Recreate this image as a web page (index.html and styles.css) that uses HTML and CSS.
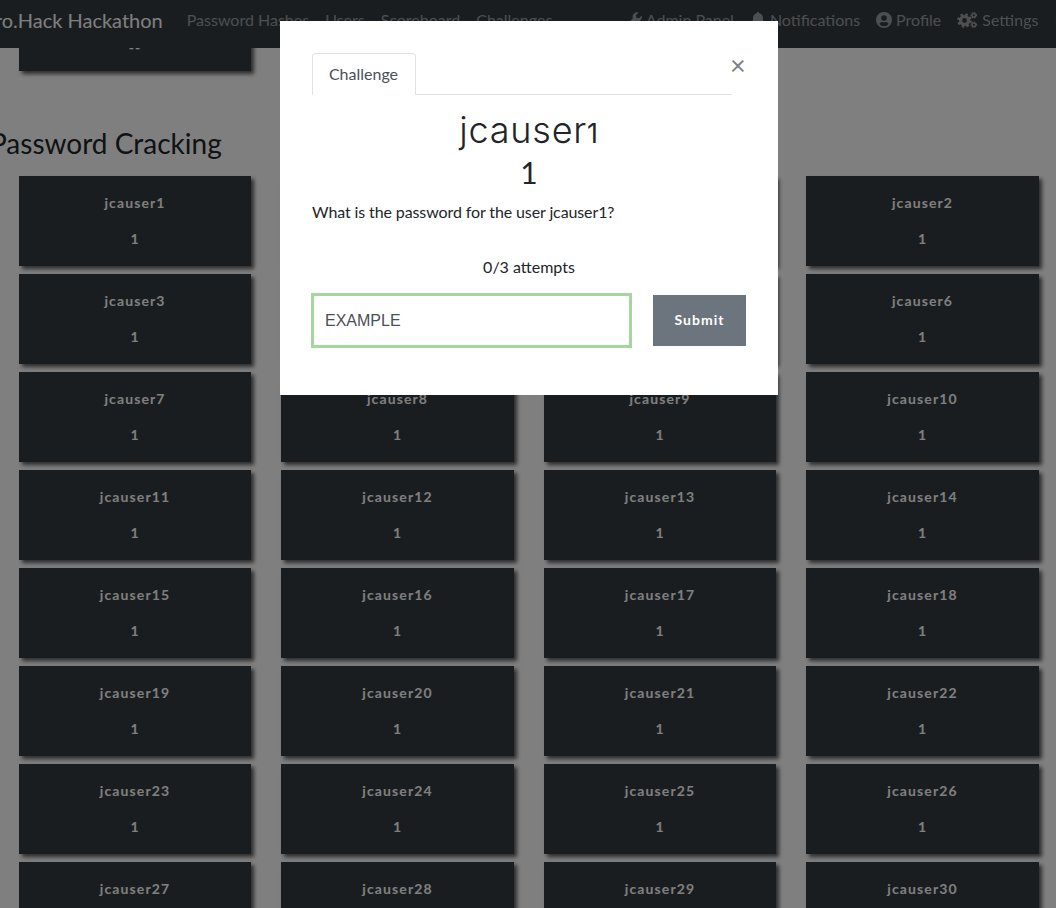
FILE: index.html
```html
<!DOCTYPE html>
<html lang="en">
<head>
<meta charset="UTF-8">
<meta name="viewport" content="width=device-width, initial-scale=1.0">
<title>Pro.Hack Hackathon</title>
<link rel="stylesheet" href="styles.css">
</head>
<body>
<div class="navbar">
  <a class="brand">Pro.Hack Hackathon</a>
  <nav class="nav-left">
    <a>Password Hashes</a>
    <a>Users</a>
    <a>Scoreboard</a>
    <a>Challenges</a>
  </nav>
  <nav class="nav-right">
    <a><svg class="icon" viewBox="0 0 16 16"><path d="M15.700 3.600 13 6.300l-2.600-.5-.5-2.600L12.600.5a4.500 4.500 0 0 0-5.700 5.800L.7 12.500a1.900 1.900 0 0 0 2.700 2.700l6.200-6.200a4.500 4.500 0 0 0 6.100-5.400z"/></svg>Admin Panel</a>
    <a><svg class="icon" viewBox="0 0 16 16"><path d="M8 0a1.200 1.200 0 0 0-1.200 1.300C4.400 1.800 3 3.700 3 6c0 3.400-1.300 4.500-2 5.400v1.100h14v-1.100c-.7-.9-2-2-2-5.400 0-2.300-1.400-4.200-3.800-4.700A1.200 1.200 0 0 0 8 0zM6.200 13.500a1.800 1.800 0 0 0 3.600 0z"/></svg>Notifications</a>
    <a><svg class="icon" viewBox="0 0 16 16"><path fill-rule="evenodd" d="M8 0a8 8 0 1 0 0 16A8 8 0 0 0 8 0zm0 3.200a2.800 2.800 0 1 1 0 5.600 2.800 2.800 0 0 1 0-5.600zm0 11a6.200 6.200 0 0 1-4.700-2.200C3.800 10.800 5 10 6.200 10c.6.200 1.200.3 1.800.3s1.200-.1 1.800-.3c1.200 0 2.400.8 2.900 2A6.200 6.200 0 0 1 8 14.200z"/></svg>Profile</a>
    <a><svg class="icon icon-wide" viewBox="0 0 20 16">
      <g class="cog"><circle cx="7" cy="8.500" r="4" stroke-width="3.200"/><circle cx="7" cy="8.500" r="6.300" stroke-width="2" stroke-dasharray="2.600 2.350"/></g>
      <g class="cog"><circle cx="16.300" cy="3.200" r="1.800" stroke-width="1.500"/><circle cx="16.300" cy="3.200" r="2.900" stroke-width="1" stroke-dasharray="1.300 1.430"/></g>
      <g class="cog"><circle cx="16.300" cy="12.800" r="1.800" stroke-width="1.500"/><circle cx="16.300" cy="12.800" r="2.900" stroke-width="1" stroke-dasharray="1.300 1.430"/></g>
    </svg>Settings</a>
    <a>Logout</a>
  </nav>
</div>

<div class="page">
  <div class="card-row">
    <div class="card card-top"><p>--</p></div>
  </div>

  <h2 class="category">Password Cracking</h2>

  <div class="card-grid">
    <div class="card"><h5>jcauser1</h5><p>1</p></div>
    <div class="card"></div>
    <div class="card"></div>
    <div class="card"><h5>jcauser2</h5><p>1</p></div>
    <div class="card"><h5>jcauser3</h5><p>1</p></div>
    <div class="card"><h5>jcauser4</h5><p>1</p></div>
    <div class="card"><h5>jcauser5</h5><p>1</p></div>
    <div class="card"><h5>jcauser6</h5><p>1</p></div>
    <div class="card"><h5>jcauser7</h5><p>1</p></div>
    <div class="card"><h5>jcauser8</h5><p>1</p></div>
    <div class="card"><h5>jcauser9</h5><p>1</p></div>
    <div class="card"><h5>jcauser10</h5><p>1</p></div>
    <div class="card"><h5>jcauser11</h5><p>1</p></div>
    <div class="card"><h5>jcauser12</h5><p>1</p></div>
    <div class="card"><h5>jcauser13</h5><p>1</p></div>
    <div class="card"><h5>jcauser14</h5><p>1</p></div>
    <div class="card"><h5>jcauser15</h5><p>1</p></div>
    <div class="card"><h5>jcauser16</h5><p>1</p></div>
    <div class="card"><h5>jcauser17</h5><p>1</p></div>
    <div class="card"><h5>jcauser18</h5><p>1</p></div>
    <div class="card"><h5>jcauser19</h5><p>1</p></div>
    <div class="card"><h5>jcauser20</h5><p>1</p></div>
    <div class="card"><h5>jcauser21</h5><p>1</p></div>
    <div class="card"><h5>jcauser22</h5><p>1</p></div>
    <div class="card"><h5>jcauser23</h5><p>1</p></div>
    <div class="card"><h5>jcauser24</h5><p>1</p></div>
    <div class="card"><h5>jcauser25</h5><p>1</p></div>
    <div class="card"><h5>jcauser26</h5><p>1</p></div>
    <div class="card"><h5>jcauser27</h5><p>1</p></div>
    <div class="card"><h5>jcauser28</h5><p>1</p></div>
    <div class="card"><h5>jcauser29</h5><p>1</p></div>
    <div class="card"><h5>jcauser30</h5><p>1</p></div>
  </div>
</div>

<div class="backdrop"></div>

<div class="modal">
  <button class="close">&times;</button>
  <ul class="tabs">
    <li class="tab">Challenge</li>
  </ul>
  <h3 class="challenge-name">jcauser<span class="oldstyle">1</span></h3>
  <h4 class="challenge-value">1</h4>
  <p class="challenge-desc">What is the password for the user jcauser1?</p>
  <p class="attempts">0/3 attempts</p>
  <div class="submit-row">
    <input class="answer" type="text" value="EXAMPLE">
    <button class="submit-btn">Submit</button>
  </div>
</div>
</body>
</html>
```

FILE: styles.css
```css
html, body {
  height: 100%;
}

body {
  font-family: Lato, "Liberation Sans", sans-serif;
  background-color: #fff;
  color: #212529;
  margin: 0;
  padding: 0;
  overflow: hidden;
}

.navbar {
  position: fixed;
  top: 0;
  left: -17px;
  right: -47px;
  height: 48px;
  box-sizing: border-box;
  padding-bottom: 9px;
  background-color: #343a40;
  display: flex;
  align-items: center;
  z-index: 10;
  white-space: nowrap;
}

.brand {
  font-size: 20px;
  color: #fff;
  margin-right: 24px;
}

.navbar nav {
  display: flex;
  gap: 16px;
  font-size: 16px;
  color: rgba(255, 255, 255, 0.5);
}

.nav-right {
  margin-left: auto;
}

.icon {
  width: 16px;
  height: 16px;
  fill: currentColor;
  margin-right: 4px;
  vertical-align: -2px;
}

.icon-wide {
  width: 21px;
  margin-right: 4px;
}

.cog {
  fill: none;
  stroke: currentColor;
}

.page {
  margin: -19px 0 0 0;
}

.card-row, .card-grid {
  display: grid;
  grid-template-columns: repeat(4, 232.5px);
  column-gap: 30px;
  row-gap: 8px;
  padding-left: 18.75px;
}

.card {
  height: 90px;
  box-sizing: border-box;
  background-color: #343a40;
  box-shadow: 3px 3px 4px rgba(0, 0, 0, 0.65);
  color: #fff;
  text-align: center;
  padding-top: 18px;
  font-size: 14px;
  font-weight: 700;
  letter-spacing: 1.1px;
}

.card h5 {
  margin: 0 0 19px 0;
  font-size: 14px;
  line-height: 17px;
  font-weight: 700;
}

.card p {
  margin: 0;
  line-height: 17px;
}

.card-top p {
  margin-top: 40px;
}

.category {
  margin: 55px 0 16px -10px;
  font-size: 28px;
  line-height: 34px;
  font-weight: 400;
  color: #212529;
}

.backdrop {
  position: fixed;
  top: 0;
  left: 0;
  right: 0;
  bottom: 0;
  background-color: rgba(0, 0, 0, 0.5);
  z-index: 20;
}

.modal {
  position: fixed;
  top: 21px;
  left: 280px;
  width: 498px;
  height: 374px;
  box-sizing: border-box;
  padding: 32px 32px 0 32px;
  background-color: #fff;
  z-index: 30;
}

.close {
  position: absolute;
  top: 30px;
  left: 450px;
  padding: 0;
  border: none;
  background: none;
  font-family: Lato, sans-serif;
  font-size: 27px;
  line-height: 27px;
  color: #7b7f83;
}

.tabs {
  list-style: none;
  margin: 0 0 15px 0;
  padding: 0;
  width: 420px;
  height: 42px;
  box-sizing: border-box;
  border-bottom: 1px solid #dee2e6;
  display: flex;
}

.tab {
  width: 104px;
  height: 42px;
  box-sizing: border-box;
  padding-right: 1px;
  border: 1px solid #dee2e6;
  border-bottom: 1px solid #fff;
  border-radius: 4px 4px 0 0;
  background-color: #fff;
  color: #495057;
  font-size: 16px;
  line-height: 40px;
  text-align: center;
}

.challenge-name {
  margin: 0;
  width: 434px;
  height: 40px;
  font-family: Inter, sans-serif;
  font-size: 36px;
  line-height: 40px;
  font-weight: 300;
  letter-spacing: 0.8px;
  text-align: center;
}

.oldstyle {
  font-size: 27px;
  font-weight: 400;
  line-height: 20px;
}

.challenge-value {
  margin: 4px 0 0 0;
  width: 434px;
  font-size: 30px;
  line-height: 36px;
  font-weight: 400;
  text-align: center;
}

.challenge-desc {
  margin: 10px 0 0 0;
  font-size: 16px;
  line-height: 24px;
  letter-spacing: -0.11px;
}

.attempts {
  margin: 31px 0 0 0;
  width: 434px;
  font-size: 16px;
  line-height: 24px;
  text-align: center;
}

.submit-row {
  display: flex;
  align-items: center;
  margin: 14px 0 0 -1px;
}

.answer {
  width: 321px;
  height: 55px;
  flex-shrink: 0;
  box-sizing: border-box;
  padding: 0 11px;
  border: 3px solid #a3d79d;
  outline: none;
  font-family: "Liberation Sans", Arial, sans-serif;
  font-size: 16px;
  color: #495057;
}

.submit-btn {
  width: 93px;
  height: 51px;
  flex-shrink: 0;
  margin-left: 21px;
  padding: 0 0 2px 0;
  border: none;
  background-color: #6c757d;
  color: #fff;
  font-family: Lato, sans-serif;
  font-size: 14px;
  font-weight: 700;
  letter-spacing: 1px;
}
```
